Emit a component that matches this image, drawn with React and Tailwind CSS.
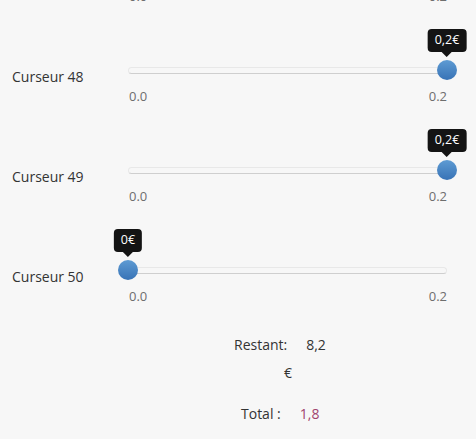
import React from 'react';

const sliders = [
  { id: 48, value: 0.2 },
  { id: 49, value: 0.2 },
  { id: 50, value: 0 },
];

const MAX = 0.2;

const formatEuro = (v) => (v === 0 ? '0€' : `${String(v).replace('.', ',')}€`);

const MinMax = () => (
  <div className="flex justify-between text-[13px] text-[#6e6e6e]">
    <span className="ml-[1px]">0.0</span>
    <span>0.2</span>
  </div>
);

const SliderRow = ({ id, value }) => {
  const pct = (value / MAX) * 100;
  return (
    <div className="flex h-[100px]">
      <div className="w-[128px] shrink-0 pl-3 pt-[66px] text-[14px] text-[#333]">Curseur {id}</div>
      <div className="relative w-[319px]">
        {/* track */}
        <div className="absolute left-0 right-0 top-[67px] h-[7px] rounded-full border border-[#e8e8e8] border-b-[#cfcfcf] bg-[#f7f7f7]" />
        {/* tooltip */}
        <div className="absolute top-[29px] -translate-x-1/2" style={{ left: `${pct}%` }}>
          <div className="relative rounded-[4px] bg-[#141414] px-[7px] h-[23px] flex items-center text-[12.5px] text-white whitespace-nowrap">
            {formatEuro(value)}
            <div className="absolute left-1/2 -bottom-[5px] -translate-x-1/2 w-0 h-0 border-l-[5px] border-r-[5px] border-t-[5px] border-l-transparent border-r-transparent border-t-[#141414]" />
          </div>
        </div>
        {/* knob */}
        <div
          className="absolute top-[60px] h-[20px] w-[20px] -translate-x-1/2 rounded-full bg-gradient-to-b from-[#5e9bd3] to-[#3873b6]"
          style={{ left: `${pct}%` }}
        />
        <div className="absolute left-0 right-0 top-[87px]">
          <MinMax />
        </div>
      </div>
    </div>
  );
};

const App = () => {
  return (
    <div className="h-[439px] w-[476px] overflow-hidden bg-[#f7f7f7] text-[#333]" style={{ fontFamily: '"Open Sans", sans-serif' }}>
      {/* end of the previous slider, scrolled mostly out of view */}
      <div className="-mt-[13px] h-[13px] ml-[128px] w-[319px]">
        <MinMax />
      </div>
      {sliders.map((s) => (
        <SliderRow key={s.id} {...s} />
      ))}
      <div className="mt-[34px] pl-[234px] text-[14px]">
        <div className="flex">
          <span>Restant:</span>
          <span className="ml-[19px]">8,2</span>
        </div>
        <div className="mt-[7px] pl-[50px]">€</div>
        <div className="mt-[20px] flex pl-[7px]">
          <span>Total :</span>
          <span className="ml-[19px] text-[#a0446e]">1,8</span>
        </div>
      </div>
    </div>
  );
};

export default App;
